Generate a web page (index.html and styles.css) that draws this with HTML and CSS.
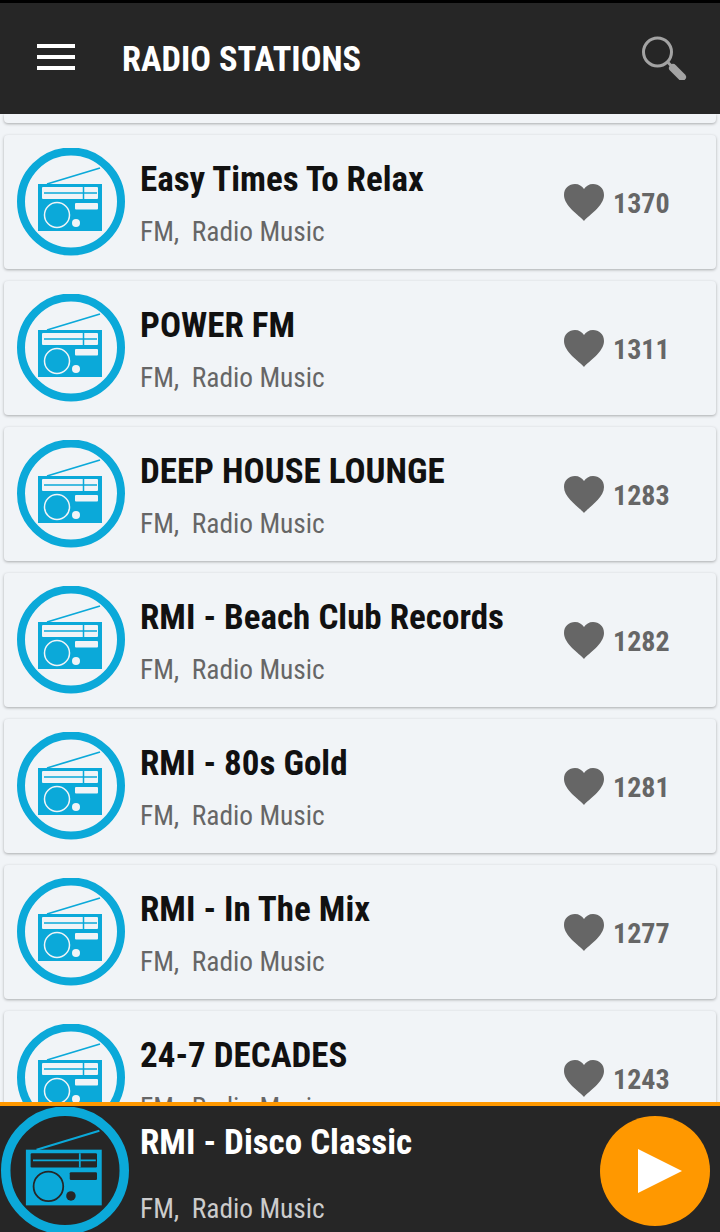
FILE: index.html
```html
<!DOCTYPE html>
<html lang="en">
<head>
<meta charset="utf-8">
<title>Radio Stations</title>
<link rel="stylesheet" href="styles.css">
</head>
<body>
<svg class="defs" width="0" height="0" aria-hidden="true">
  <symbol id="radio" viewBox="0 0 108 108">
    <circle cx="54" cy="53.500" r="50" fill="none" stroke="#0ba9d9" stroke-width="8"/>
    <path d="M30 36 83 20" fill="none" stroke="#0ba9d9" stroke-width="1.700"/>
    <rect x="21" y="36" width="64" height="47" fill="#0ba9d9"/>
    <rect class="cut" x="25" y="39" width="56" height="12" rx="1"/>
    <path d="M27 45H80M66.500 39V51" fill="none" stroke="#0ba9d9" stroke-width="1.500"/>
    <rect class="cut" x="58" y="55" width="23" height="6.500" rx="1"/>
    <circle class="ring" cx="40" cy="67" r="12.500"/>
    <circle class="cut" cx="59" cy="75" r="4"/>
  </symbol>
  <symbol id="heart" viewBox="0 0 40 37">
    <path d="M20 37C15 31 0 22 0 11 0 4 5 0 11 0c4 0 7 2 9 5 2-3 5-5 9-5 6 0 11 4 11 11C40 22 25 31 20 37Z"/>
  </symbol>
</svg>
<div class="app">
  <header class="topbar">
    <button class="menu" aria-label="Menu"><span></span><span></span><span></span></button>
    <h1 class="page-title">RADIO STATIONS</h1>
    <svg class="search" viewBox="0 0 46 46" aria-label="Search">
      <circle cx="16.500" cy="18" r="14" fill="none" stroke="#a3a3a3" stroke-width="3"/>
      <path d="M27 28.500 31 32.500" stroke="#a3a3a3" stroke-width="3"/>
      <path d="M32 34 41 43" stroke="#a3a3a3" stroke-width="8" stroke-linecap="round"/>
    </svg>
  </header>
  <main class="list">
    <div class="stub"></div>
    <article class="card">
      <svg class="logo"><use href="#radio"/></svg>
      <div class="info"><h2>Easy Times To Relax</h2><p>FM,&nbsp; Radio Music</p></div>
      <div class="likes"><svg class="heart"><use href="#heart"/></svg><span>1370</span></div>
    </article>
    <article class="card">
      <svg class="logo"><use href="#radio"/></svg>
      <div class="info"><h2>POWER FM</h2><p>FM,&nbsp; Radio Music</p></div>
      <div class="likes"><svg class="heart"><use href="#heart"/></svg><span>1311</span></div>
    </article>
    <article class="card">
      <svg class="logo"><use href="#radio"/></svg>
      <div class="info"><h2>DEEP HOUSE LOUNGE</h2><p>FM,&nbsp; Radio Music</p></div>
      <div class="likes"><svg class="heart"><use href="#heart"/></svg><span>1283</span></div>
    </article>
    <article class="card">
      <svg class="logo"><use href="#radio"/></svg>
      <div class="info"><h2>RMI - Beach Club Records</h2><p>FM,&nbsp; Radio Music</p></div>
      <div class="likes"><svg class="heart"><use href="#heart"/></svg><span>1282</span></div>
    </article>
    <article class="card">
      <svg class="logo"><use href="#radio"/></svg>
      <div class="info"><h2>RMI - 80s Gold</h2><p>FM,&nbsp; Radio Music</p></div>
      <div class="likes"><svg class="heart"><use href="#heart"/></svg><span>1281</span></div>
    </article>
    <article class="card">
      <svg class="logo"><use href="#radio"/></svg>
      <div class="info"><h2>RMI - In The Mix</h2><p>FM,&nbsp; Radio Music</p></div>
      <div class="likes"><svg class="heart"><use href="#heart"/></svg><span>1277</span></div>
    </article>
    <article class="card">
      <svg class="logo"><use href="#radio"/></svg>
      <div class="info"><h2>24-7 DECADES</h2><p>FM,&nbsp; Radio Music</p></div>
      <div class="likes"><svg class="heart"><use href="#heart"/></svg><span>1243</span></div>
    </article>
  </main>
  <footer class="player">
    <svg class="player-logo"><use href="#radio"/></svg>
    <div class="player-info"><h2>RMI - Disco Classic</h2><p>FM,&nbsp; Radio Music</p></div>
    <button class="play" aria-label="Play"><svg viewBox="0 0 44 44"><path d="M0 0 44 22 0 44Z" fill="#fff"/></svg></button>
  </footer>
</div>
</body>
</html>
```
FILE: styles.css
```css
* { box-sizing: border-box; }
html, body { margin: 0; padding: 0; }
body { width: 720px; height: 1232px; overflow: hidden; background: #f1f4f7; font-family: Roboto, "Liberation Sans", sans-serif; }
.defs { position: absolute; }
.app { --cut: #f1f4f7; width: 720px; height: 1232px; display: flex; flex-direction: column; }
.cut { fill: var(--cut); }
.ring { fill: #0ba9d9; stroke: var(--cut); stroke-width: 1.500; }

.topbar { flex: none; height: 114px; border-top: 3px solid #000; background: #262626; display: flex; align-items: center; padding-left: 37px; position: relative; z-index: 1; }
.menu { width: 38px; height: 26px; padding: 0; border: 0; background: none; display: flex; flex-direction: column; justify-content: space-between; margin-bottom: 3px; }
.menu span { display: block; height: 4px; background: #fff; }
.page-title { margin: 0 0 0 47px; font-size: 34.400px; line-height: 40px; font-weight: 700; color: #fff; font-stretch: 75%; white-space: nowrap; }
.search { width: 46px; height: 46px; margin-left: auto; margin-right: 33px; margin-bottom: 3px; }

.list { flex: 1; min-height: 0; overflow: hidden; padding: 0 4px; display: flex; flex-direction: column; gap: 12px; }
.stub { flex: none; height: 9px; background: #f1f4f7; border-radius: 0 0 4px 4px; box-shadow: 0 1px 3px rgba(0,0,0,.3); }
.card { flex: none; height: 134px; background: #f1f4f7; border-radius: 4px; box-shadow: 0 1px 3px rgba(0,0,0,.3); display: flex; align-items: center; padding-left: 13px; }
.logo { flex: none; width: 108px; height: 108px; }
.info { flex: none; width: 424px; margin-left: 15px; margin-top: 5px; }
.info h2, .player-info h2 { margin: 0; font-size: 35px; line-height: 40px; font-weight: 700; color: #111; font-stretch: 75%; white-space: nowrap; }
.info p, .player-info p { margin: 15px 0 0; font-size: 27.400px; line-height: 34px; color: #666; font-stretch: 75%; white-space: nowrap; }
.likes { flex: none; display: flex; align-items: center; gap: 9px; }
.heart { width: 40px; height: 37px; fill: #666; }
.likes span { font-size: 28px; font-weight: 700; color: #666; font-stretch: 75%; margin-top: 2px; }

.player { flex: none; height: 130px; border-top: 4px solid #ff9800; background: #262626; display: flex; align-items: center; position: relative; --cut: #262626; overflow: hidden; }
.player-logo { position: absolute; left: 1px; top: 1px; width: 128px; height: 128px; }
.player-info { margin-left: 140px; margin-top: 11px; }
.player-info h2 { color: #fff; }
.player-info p { margin-top: 29px; color: #ccc; }
.play { margin-left: auto; margin-right: 10px; margin-top: 4px; width: 110px; height: 110px; border: 0; padding: 0; border-radius: 50%; background: #ff9800; display: flex; align-items: center; justify-content: center; }
.play svg { width: 44px; height: 44px; margin-left: 9px; }
```
